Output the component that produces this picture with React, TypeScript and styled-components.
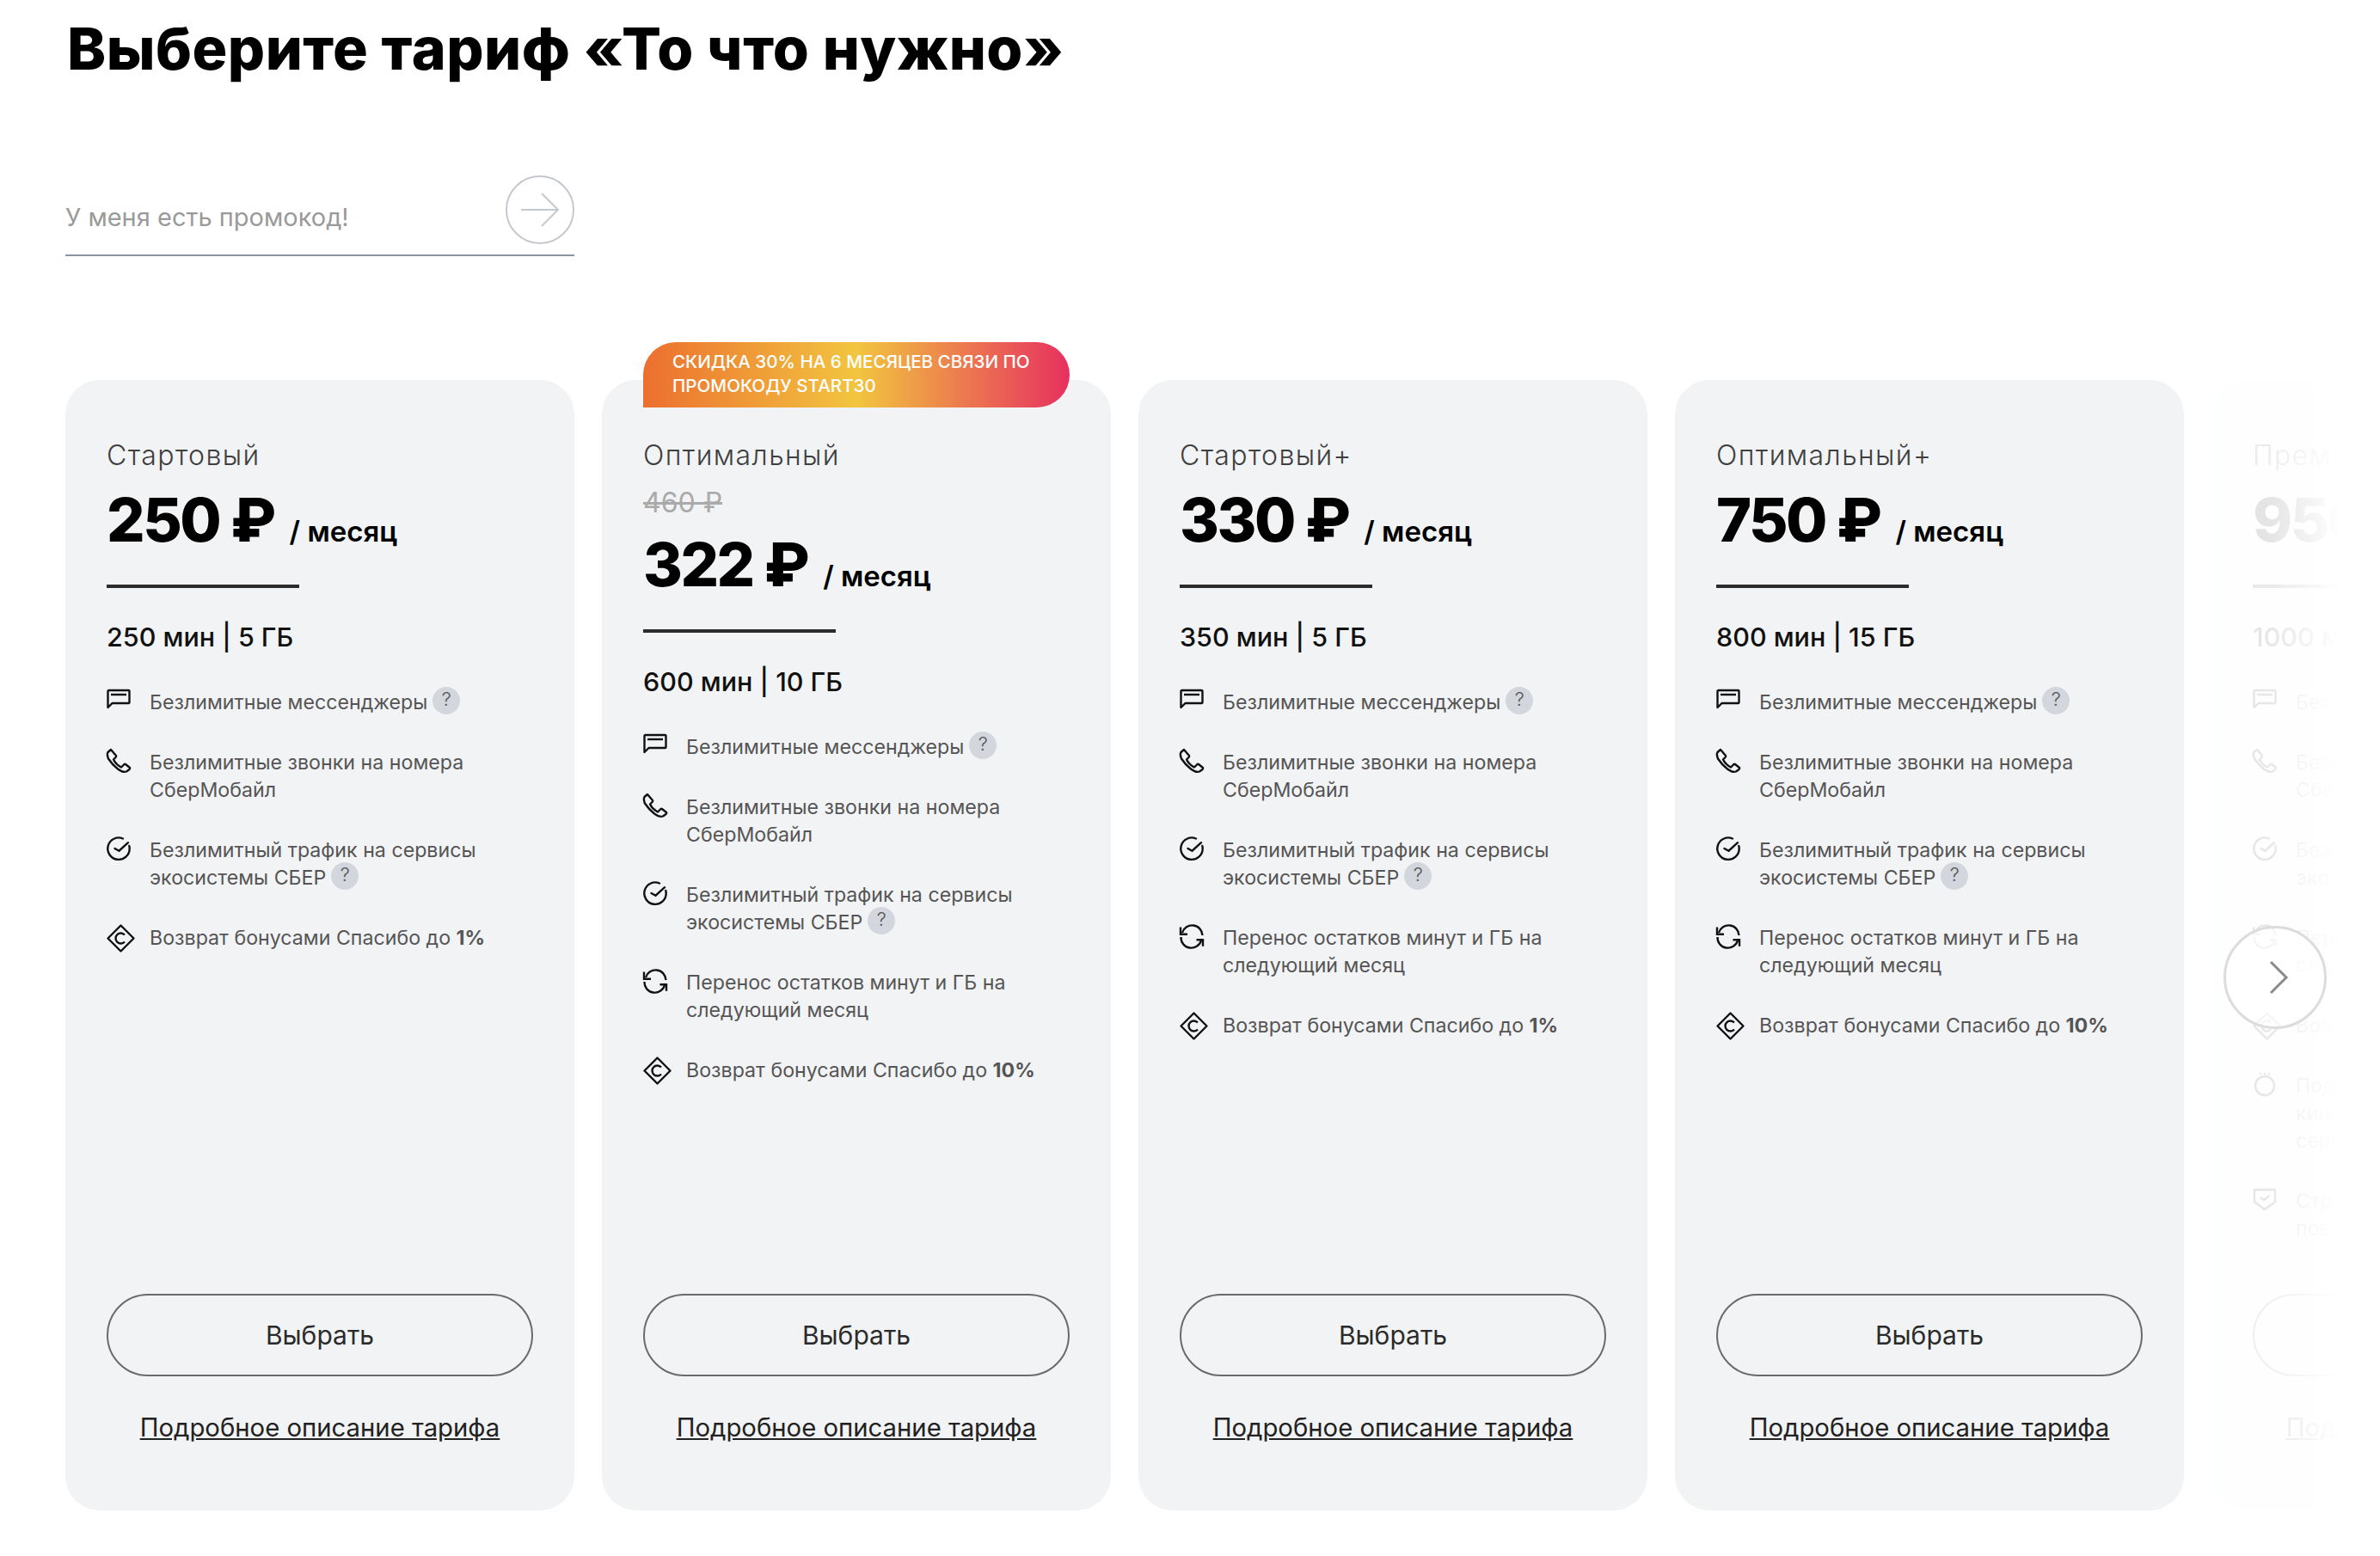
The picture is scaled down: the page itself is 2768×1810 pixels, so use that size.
import React from "react";
import styled, { createGlobalStyle } from "styled-components";

const GlobalStyle = createGlobalStyle`
  html, body {
    margin: 0;
    padding: 0;
    background: #fff;
    font-family: Inter, "Noto Sans", sans-serif;
  }
`;

const Page = styled.div`
  position: relative;
  width: 2768px;
  height: 1810px;
  overflow: hidden;
  background: #fff;
`;

const Title = styled.h1`
  margin: 16px 0 0 78px;
  font-size: 68px;
  line-height: 80px;
  font-weight: 800;
  letter-spacing: 0.5px;
  color: #000;
`;

const Promo = styled.div`
  width: 592px;
  height: 80px;
  margin: 108px 0 0 76px;
  padding-bottom: 12px;
  border-bottom: 2px solid #8b93a3;
  display: flex;
  align-items: center;
  justify-content: space-between;
`;

const PromoText = styled.span`
  margin-top: 16px;
  font-size: 29px;
  color: #9a9a9a;
`;

const PromoButton = styled.div`
  width: 76px;
  height: 76px;
  border: 2px solid #c5c9ce;
  border-radius: 50%;
  display: flex;
  align-items: center;
  justify-content: center;
`;

const Cards = styled.div`
  display: flex;
  gap: 32px;
  margin-top: 144px;
  padding-left: 76px;
`;

const Card = styled.div<{ $ghost?: boolean }>`
  position: relative;
  flex: none;
  box-sizing: border-box;
  width: 592px;
  height: 1315px;
  padding: 70px 48px 78px;
  border-radius: 40px;
  background: #f2f3f5;
  display: flex;
  flex-direction: column;
  ${(p) =>
    p.$ghost &&
    `
    -webkit-mask-image: linear-gradient(90deg, rgba(0,0,0,.12) 0, rgba(0,0,0,.1) 70px, rgba(0,0,0,0) 150px);
    mask-image: linear-gradient(90deg, rgba(0,0,0,.12) 0, rgba(0,0,0,.1) 70px, rgba(0,0,0,0) 150px);
  `}
`;

const Badge = styled.div`
  position: absolute;
  top: -44px;
  left: 48px;
  box-sizing: border-box;
  width: 496px;
  height: 76px;
  padding: 9px 0 0 34px;
  border-radius: 38px 38px 38px 0;
  background: linear-gradient(90deg, #ec6f2f 0%, #f2c53f 50%, #e6305f 100%);
  color: #fff;
  font-size: 20.6px;
  line-height: 28px;
  font-weight: 500;
  white-space: nowrap;
`;

const Name = styled.div`
  font-size: 32px;
  line-height: 36px;
  font-weight: 300;
  letter-spacing: 1.4px;
  color: #3f3f3f;
`;

const PriceBlock = styled.div`
  margin-top: 17px;
`;

const OldPrice = styled.div`
  height: 52px;
  font-size: 32px;
  line-height: 40px;
  color: #aaa;
  text-decoration: line-through;
`;

const PriceRow = styled.div`
  display: flex;
  align-items: baseline;
  height: 80px;
  line-height: 80px;
`;

const PriceValue = styled.span`
  font-size: 70px;
  font-weight: 800;
  letter-spacing: -2.5px;
  color: #000;
`;

const PricePer = styled.span`
  margin-left: 18px;
  font-size: 33px;
  font-weight: 600;
  color: #000;
`;

const Divider = styled.div`
  width: 224px;
  height: 4px;
  margin-top: 35px;
  background: #2b2b2b;
`;

const Minutes = styled.div`
  margin-top: 37px;
  font-size: 30.5px;
  line-height: 40px;
  font-weight: 500;
  color: #111;
`;

const Features = styled.div`
  margin-top: 40px;
  display: flex;
  flex-direction: column;
  gap: 38px;
`;

const Feature = styled.div`
  display: flex;
  gap: 22px;
`;

const FeatureIcon = styled.div`
  flex: none;
  width: 28px;
  height: 32px;
  display: flex;
  align-items: flex-start;

  svg {
    flex: none;
    overflow: visible;
  }
`;

const FeatureText = styled.div`
  font-size: 23.2px;
  line-height: 32px;
  color: #555;
  white-space: nowrap;

  b {
    font-weight: 700;
  }
`;

const Hint = styled.span`
  display: inline-block;
  position: relative;
  top: -4px;
  width: 32px;
  height: 32px;
  margin: -4px 0 -4px 6px;
  border-radius: 50%;
  background: #d3d6dc;
  color: #555;
  font-size: 22px;
  line-height: 28px;
  font-weight: 300;
  text-align: center;
  vertical-align: middle;
`;

const SelectButton = styled.div`
  margin-top: auto;
  box-sizing: border-box;
  height: 96px;
  border: 2px solid #6a6a6a;
  border-radius: 48px;
  display: flex;
  align-items: center;
  justify-content: center;
  font-size: 30px;
  color: #2b2b2b;
`;

const DetailsLink = styled.a`
  margin-top: 42px;
  font-size: 29.3px;
  line-height: 36px;
  color: #222;
  text-align: center;
  text-decoration: underline;
  white-space: nowrap;
`;

const NextButton = styled.div`
  position: absolute;
  left: 2586px;
  top: 1077px;
  box-sizing: border-box;
  width: 120px;
  height: 120px;
  padding-left: 8px;
  border: 3px solid #dcdcdc;
  border-radius: 50%;
  background: rgba(255, 255, 255, 0.6);
  display: flex;
  align-items: center;
  justify-content: center;
`;

const icon = { fill: "none", stroke: "#111", strokeWidth: 2.4 };

const IconMessage = () => (
  <svg width="28" height="24" viewBox="0 0 28 24" {...icon}>
    <path d="M2.500 2H25.500a1 1 0 0 1 1 1V16a1 1 0 0 1-1 1H6.500L1.500 22V3a1 1 0 0 1 1-1z" strokeLinejoin="round" />
    <path d="M5 7h18" />
  </svg>
);
const IconPhone = () => (
  <svg width="28" height="28" viewBox="0 0 28 28" {...icon}>
    <path d="M5 1l6 7q.5 1-.5 2L8 12.500Q10.500 18 17 21.500L20 18.500q1-1 2-.5l5 4q.5 1-.5 2L23 26.500Q19 28 13 23.500 7 19 2 11.500 0 6.500 1.500 4z" strokeLinejoin="round" />
  </svg>
);
const IconCheck = () => (
  <svg width="28" height="28" viewBox="0 0 28 28" {...icon} strokeLinecap="round">
    <path d="M19 2.500A12.700 12.700 0 1 0 26.700 14c0-1-.1-2-.4-3" />
    <path d="M9.500 14l5 2.700 10.500-9.500" />
  </svg>
);
const IconRefresh = () => (
  <svg width="28" height="28" viewBox="0 0 28 28" {...icon}>
    <path d="M3 10A12 12 0 0 1 26.500 13" />
    <path d="M1.500 15A12 12 0 0 0 25 19" />
    <path d="M1 3.500v8.200h8M19.500 18.300h7.500v7.500" />
  </svg>
);
const IconBonus = () => (
  <svg width="33" height="33" viewBox="0 0 33 33" {...icon}>
    <path d="M16.500 1.500 31.500 16.500 16.500 31.500 1.500 16.500z" strokeLinejoin="round" />
    <path d="M21 12.500a6 6 0 1 0 0 8" />
  </svg>
);
const IconMovie = () => (
  <svg width="28" height="28" viewBox="0 0 28 28" {...icon}>
    <circle cx="14" cy="16" r="11" />
    <path d="M8 2h2M13 2h2M18 2h2" />
  </svg>
);
const IconShield = () => (
  <svg width="28" height="28" viewBox="0 0 28 28" {...icon}>
    <path d="M2 3h24v14l-12 9-12-9V3z" strokeLinejoin="round" />
    <path d="m9 12 4 3 6-5" />
  </svg>
);

type FeatureData = { icon: React.ReactNode; lines: React.ReactNode[] };

const messengers: FeatureData = {
  icon: <IconMessage />,
  lines: [<>Безлимитные мессенджеры<Hint>?</Hint></>],
};
const calls: FeatureData = {
  icon: <IconPhone />,
  lines: ["Безлимитные звонки на номера", "СберМобайл"],
};
const traffic: FeatureData = {
  icon: <IconCheck />,
  lines: ["Безлимитный трафик на сервисы", <>экосистемы СБЕР<Hint>?</Hint></>],
};
const rollover: FeatureData = {
  icon: <IconRefresh />,
  lines: ["Перенос остатков минут и ГБ на", "следующий месяц"],
};
const bonus = (percent: string): FeatureData => ({
  icon: <IconBonus />,
  lines: [<>Возврат бонусами Спасибо до <b>{percent}</b></>],
});

type Plan = {
  name: string;
  price: string;
  oldPrice?: string;
  badge?: string[];
  minutes: string;
  features: FeatureData[];
  ghost?: boolean;
};

const plans: Plan[] = [
  {
    name: "Стартовый",
    price: "250 ₽",
    minutes: "250 мин | 5 ГБ",
    features: [messengers, calls, traffic, bonus("1%")],
  },
  {
    name: "Оптимальный",
    price: "322 ₽",
    oldPrice: "460 ₽",
    badge: ["СКИДКА 30% НА 6 МЕСЯЦЕВ СВЯЗИ ПО", "ПРОМОКОДУ START30"],
    minutes: "600 мин | 10 ГБ",
    features: [messengers, calls, traffic, rollover, bonus("10%")],
  },
  {
    name: "Стартовый+",
    price: "330 ₽",
    minutes: "350 мин | 5 ГБ",
    features: [messengers, calls, traffic, rollover, bonus("1%")],
  },
  {
    name: "Оптимальный+",
    price: "750 ₽",
    minutes: "800 мин | 15 ГБ",
    features: [messengers, calls, traffic, rollover, bonus("10%")],
  },
  {
    name: "Премиум",
    price: "950 ₽",
    minutes: "1000 мин | 30 ГБ",
    ghost: true,
    features: [
      messengers,
      calls,
      traffic,
      rollover,
      bonus("10%"),
      { icon: <IconMovie />, lines: ["Подписка на онлайн-", "кинотеатр: фильмы и", "сериалы"] },
      { icon: <IconShield />, lines: ["Страхование от", "повреждения"] },
    ],
  },
];

function App() {
  return (
    <Page>
      <GlobalStyle />
      <Title>Выберите тариф «То что нужно»</Title>
      <Promo>
        <PromoText>У меня есть промокод!</PromoText>
        <PromoButton>
          <svg width="46" height="40" viewBox="0 0 46 40" fill="none" stroke="#c5c9ce" strokeWidth="2">
            <path d="M1 20H44M25 1l19 19-19 19" />
          </svg>
        </PromoButton>
      </Promo>
      <Cards>
        {plans.map((plan) => (
          <Card key={plan.name} $ghost={plan.ghost}>
            {plan.badge && (
              <Badge>
                {plan.badge.map((line) => (
                  <div key={line}>{line}</div>
                ))}
              </Badge>
            )}
            <Name>{plan.name}</Name>
            <PriceBlock>
              {plan.oldPrice && <OldPrice>{plan.oldPrice}</OldPrice>}
              <PriceRow>
                <PriceValue>{plan.price}</PriceValue>
                <PricePer>/ месяц</PricePer>
              </PriceRow>
            </PriceBlock>
            <Divider />
            <Minutes>{plan.minutes}</Minutes>
            <Features>
              {plan.features.map((feature, idx) => (
                <Feature key={idx}>
                  <FeatureIcon>{feature.icon}</FeatureIcon>
                  <FeatureText>
                    {feature.lines.map((line, i) => (
                      <div key={i}>{line}</div>
                    ))}
                  </FeatureText>
                </Feature>
              ))}
            </Features>
            <SelectButton>Выбрать</SelectButton>
            <DetailsLink>Подробное описание тарифа</DetailsLink>
          </Card>
        ))}
      </Cards>
      <NextButton>
        <svg width="26" height="40" viewBox="0 0 26 40" fill="none" stroke="#8a8a8a" strokeWidth="3">
          <path d="M4 2l18 18L4 38" />
        </svg>
      </NextButton>
    </Page>
  );
}

export default App;
